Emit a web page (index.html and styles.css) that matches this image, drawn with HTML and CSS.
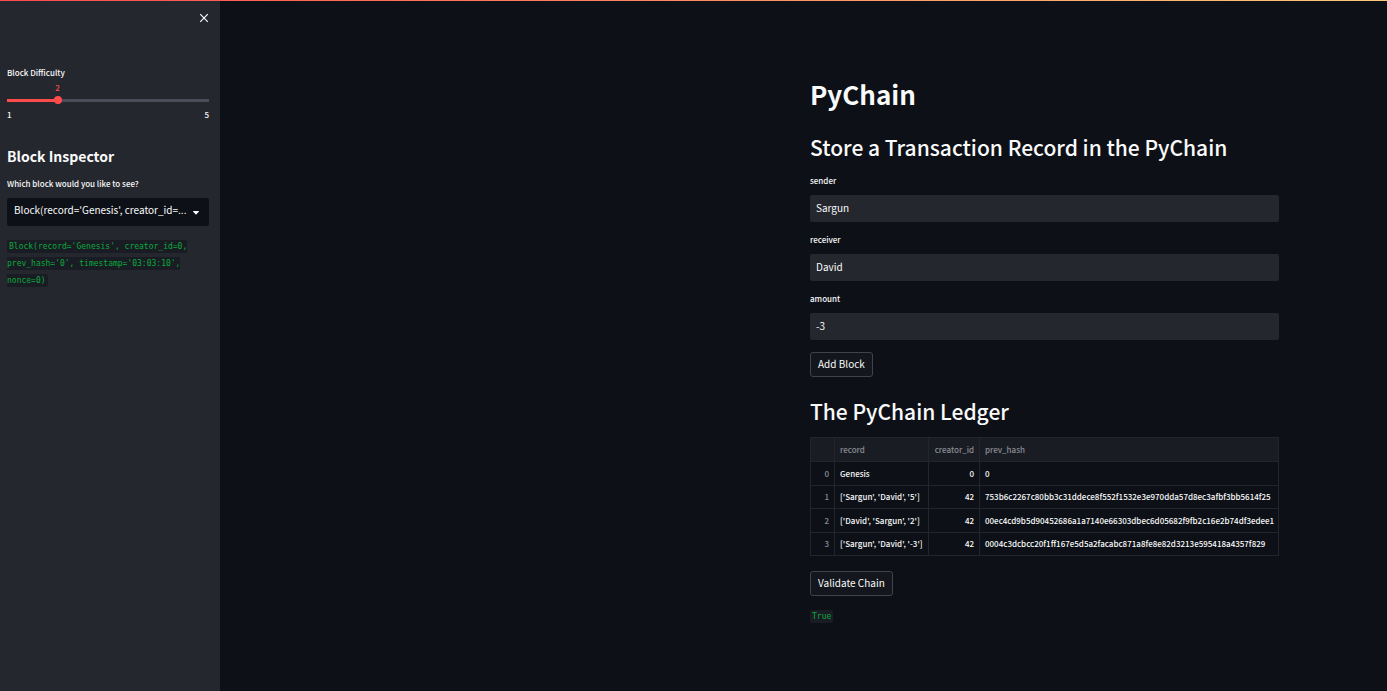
FILE: index.html
```html
<!DOCTYPE html>
<html lang="en">
<head>
<meta charset="utf-8">
<meta name="viewport" content="width=device-width, initial-scale=1">
<title>PyChain</title>
<link rel="stylesheet" href="styles.css">
</head>
<body>
<div class="decoration"></div>
<div class="app">
  <aside class="sidebar">
    <div class="sidebar-top">
      <button class="close" type="button" aria-label="Close sidebar">
        <svg viewBox="0 0 10 10" width="10" height="10"><path d="M1.2 1.2 8.8 8.8M8.8 1.2 1.2 8.8" fill="none" stroke="currentColor" stroke-width="1.2"/></svg>
      </button>
    </div>
    <div class="slider">
      <label class="label" for="difficulty">Block Difficulty</label>
      <div class="slider-value"><output for="difficulty">2</output></div>
      <input id="difficulty" class="range" type="range" min="1" max="5" value="2">
      <div class="ticks"><span>1</span><span>5</span></div>
    </div>
    <h2 class="inspector-title">Block Inspector</h2>
    <label class="label" for="block">Which block would you like to see?</label>
    <div class="select-wrap">
      <select id="block" class="select">
        <option value="0">Block(record='Genesis', creator_id=...</option>
      </select>
      <svg class="caret" viewBox="0 0 6 4" width="6" height="4"><path d="M.3 0h5.4q.5.3.1.8L3.5 3.300q-.5.4-1 0L.2.800q-.4-.5.1-.8z" fill="currentColor"/></svg>
    </div>
    <p class="code-text"><code class="code">Block(record='Genesis', creator_id=0, prev_hash='0', timestamp='03:03:10', nonce=0)</code></p>
  </aside>
  <main class="main">
    <div class="content">
      <h1 class="title">PyChain</h1>
      <h2 class="heading">Store a Transaction Record in the PyChain</h2>
      <div class="field"><label class="label" for="sender">sender</label><input id="sender" class="input" type="text" value="Sargun"></div>
      <div class="field"><label class="label" for="receiver">receiver</label><input id="receiver" class="input" type="text" value="David"></div>
      <div class="field"><label class="label" for="amount">amount</label><input id="amount" class="input" type="text" value="-3"></div>
      <button class="button" type="button">Add Block</button>
      <h2 class="heading ledger-title">The PyChain Ledger</h2>
      <table class="ledger">
        <colgroup><col class="col-index"><col class="col-record"><col class="col-creator"><col></colgroup>
        <thead><tr><th></th><th>record</th><th class="num">creator_id</th><th>prev_hash</th></tr></thead>
        <tbody>
          <tr><th class="num">0</th><td>Genesis</td><td class="num">0</td><td>0</td></tr>
          <tr><th class="num">1</th><td>['Sargun', 'David', '5']</td><td class="num">42</td><td>753b6c2267c80bb3c31ddece8f552f1532e3e970dda57d8ec3afbf3bb5614f25</td></tr>
          <tr><th class="num">2</th><td>['David', 'Sargun', '2']</td><td class="num">42</td><td>00ec4cd9b5d90452686a1a7140e66303dbec6d05682f9fb2c16e2b74df3edee1</td></tr>
          <tr><th class="num">3</th><td>['Sargun', 'David', '-3']</td><td class="num">42</td><td>0004c3dcbcc20f1ff167e5d5a2facabc871a8fe8e82d3213e595418a4357f829</td></tr>
        </tbody>
      </table>
      <button class="button" type="button">Validate Chain</button>
      <p class="code-text result"><code class="code">True</code></p>
    </div>
  </main>
</div>
</body>
</html>
```
FILE: styles.css
```css
* { box-sizing: border-box; }
body {
  margin: 0;
  background: #0d1117;
  color: #fafafa;
  font-family: "Noto Sans CJK KR", "Open Sans", sans-serif;
  font-size: 10px;
  line-height: 16px;
}
h1, h2, p { margin: 0; }
button, input, select { font: inherit; color: inherit; }
.decoration {
  position: fixed;
  top: 0;
  left: 0;
  right: 0;
  height: 1px;
  z-index: 1;
  background: linear-gradient(90deg, #ff4b4b, #fcc879);
}
.app { display: flex; min-height: 100vh; }
.sidebar {
  flex: 0 0 220px;
  padding: 9px 11px 20px 7px;
  background: #25272f;
}
.sidebar-top { display: flex; justify-content: flex-end; height: 56px; }
.close {
  display: flex;
  align-items: center;
  justify-content: center;
  width: 10px;
  height: 17px;
  padding: 0;
  border: 0;
  background: none;
}
.label { display: block; font-size: 8px; font-weight: 500; line-height: 16px; }
.slider-value {
  width: 50%;
  text-align: center;
  font-size: 8px;
  font-weight: 500;
  line-height: 14px;
  color: #ff4b4b;
}
.slider-value output { display: block; }
.range {
  display: block;
  appearance: none;
  width: calc(100% + 8px);
  height: 10px;
  margin: 0 -4px;
  background: linear-gradient(90deg, #ff4b4b 25%, #4b4c58 25%) center / calc(100% - 8px) 3px no-repeat;
}
.range::-webkit-slider-thumb {
  appearance: none;
  width: 8px;
  height: 8px;
  border-radius: 50%;
  background: #ff4b4b;
}
.ticks {
  display: flex;
  justify-content: space-between;
  font-size: 8px;
  font-weight: 500;
  line-height: 20px;
}
.inspector-title { margin: 19px 0 8px; font-size: 14px; font-weight: 600; line-height: 24px; }
.select-wrap { position: relative; margin: 6px 0 12px; }
.select {
  display: block;
  appearance: none;
  width: 100%;
  height: 28px;
  padding: 0 20px 4px 7px;
  border: 0;
  border-radius: 2px;
  background: #0d1117;
}
.caret { position: absolute; right: 10px; top: 13px; pointer-events: none; }
.code-text {
  font-family: "DejaVu Sans Mono", monospace;
  font-size: 8px;
  line-height: 17px;
}
.code {
  padding: 2px;
  border-radius: 2px;
  background: #1a1c24;
  color: #09ab3b;
  font: inherit;
}
.main {
  flex: 1;
  display: flex;
  justify-content: flex-end;
  min-width: 0;
  padding: 74px 108px 60px 40px;
}
.content { width: 100%; max-width: 469px; }
.title { font-size: 26px; font-weight: 700; line-height: 40px; }
.heading { margin: 15px 0 8px; font-size: 21px; font-weight: 500; line-height: 36px; }
.field { margin-bottom: 10px; }
.input {
  display: block;
  width: 100%;
  height: 27px;
  margin-top: 6px;
  padding: 0 6px 2px;
  border: 0;
  border-radius: 2px;
  background: #25272f;
}
.button {
  display: block;
  height: 25px;
  margin-top: 12px;
  padding: 0 7px 2px;
  border: 1px solid #41434b;
  border-radius: 3px;
  background: #13171d;
  line-height: 20px;
}
.ledger-title { margin: 16px 0 8px; }
.ledger {
  width: 100%;
  table-layout: fixed;
  border-collapse: collapse;
  border: 1px solid #262930;
  font-size: 8px;
  line-height: 16px;
}
.col-index { width: 24px; }
.col-record { width: 94px; }
.col-creator { width: 51px; }
.ledger th, .ledger td {
  height: 23px;
  padding: 0 5px;
  border: 1px solid #22252c;
  overflow: hidden;
  text-align: left;
  white-space: nowrap;
  font-weight: 500;
}
.ledger td:last-child { padding-right: 0; }
.ledger thead th { height: 24px; background: #1a1c24; }
.ledger tbody tr:nth-child(odd) td { height: 24px; }
.ledger th { color: #8b8d94; }
.ledger .num { text-align: right; }
.ledger + .button { margin-top: 15px; }
.result { margin-top: 12px; }
```
